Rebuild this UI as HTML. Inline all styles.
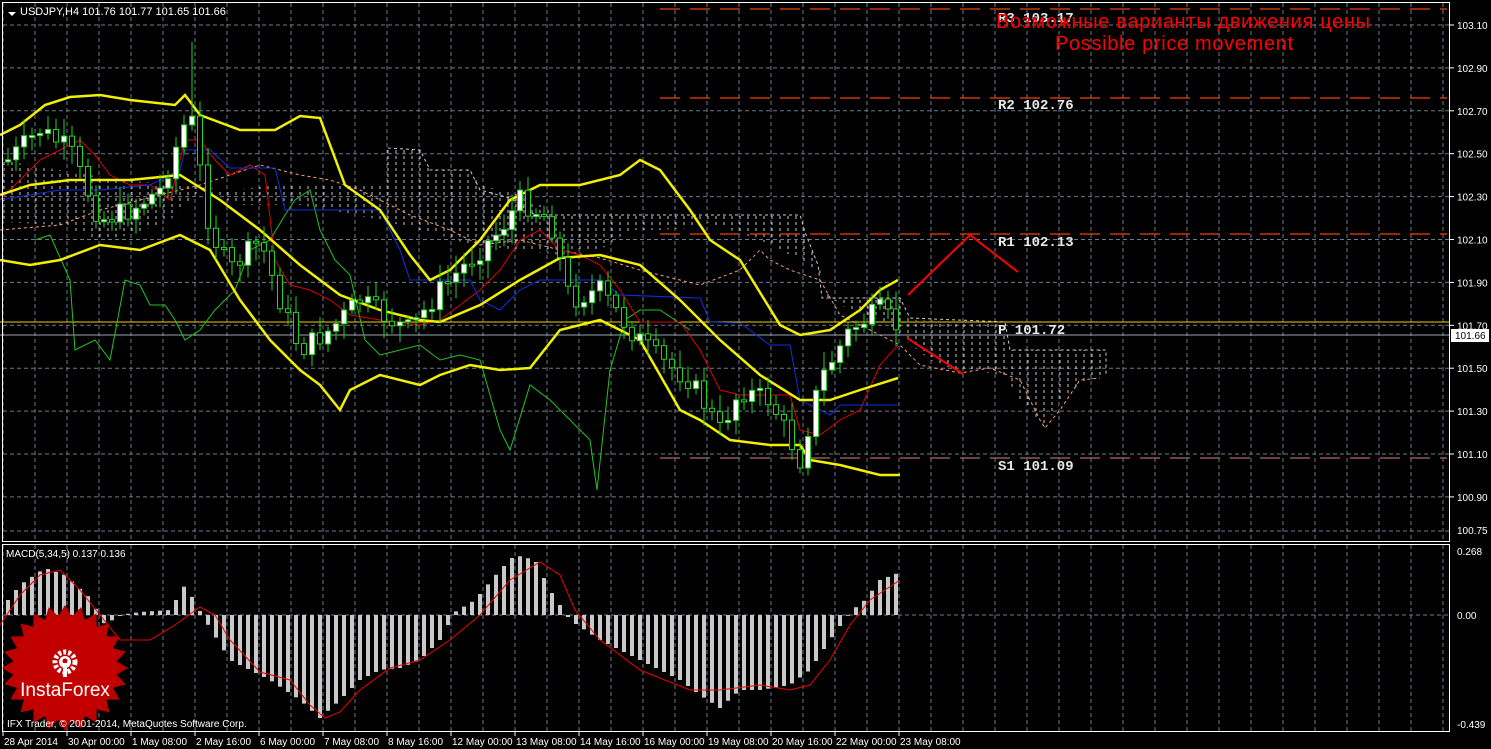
<!DOCTYPE html>
<html><head><meta charset="utf-8"><style>
html,body{margin:0;padding:0;background:#000;width:1491px;height:749px;overflow:hidden}
svg{display:block}
text{font-family:"Liberation Sans","DejaVu Sans",sans-serif}
text.mono{font-family:"Liberation Mono","DejaVu Sans Mono",monospace}
</style></head><body>
<svg id="s" width="1491" height="749" xmlns="http://www.w3.org/2000/svg">
<defs>
<pattern id="hatch" width="8" height="6" patternUnits="userSpaceOnUse"><line x1="4" y1="0" x2="4" y2="3" stroke="#ddd" stroke-width="1"/></pattern>
</defs>
<rect x="0" y="0" width="1491" height="749" fill="#000"/>
<g id="grid" stroke="#6b7a8c" stroke-dasharray="4,3" stroke-width="1"></g>
<g id="kumo">
<polygon points="0,160 60,170 120,180 180,185 230,190 280,185 320,185 380,185 388,148 420,150 430,170 470,170 480,185 520,195 560,215 640,215 700,215 800,215 804,230 820,268 823,298 838,298 900,298 910,320 1000,322 1010,350 1106,350 1106,375 1090,380 1060,400 1045,428 1030,410 1020,400 1005,375 980,372 960,372 930,360 905,340 880,320 840,305 825,290 820,275 800,260 780,250 760,240 730,230 700,220 690,228 660,230 630,230 600,250 560,255 520,250 470,245 440,235 400,225 380,220 340,212 300,205 270,205 240,205 200,190 170,220 130,235 100,240 60,225 0,222" fill="url(#hatch)" opacity="0.9"/>
<polyline points="388,148 420,150 430,170 470,170 480,190 510,198 535,215 560,215 640,215 720,215 800,215 805,232 818,265 822,298 835,298 900,298 910,318 1005,322 1010,350 1106,350 1106,376" fill="none" stroke="#fff" stroke-dasharray="3,3" opacity="0.8"/>
<polyline points="0,230 60,225 100,210 140,200 200,185 230,175 260,165 300,175 330,180 360,190 380,200 410,215 450,230 480,245 520,240 560,250 600,258 640,270 700,285 740,270 760,250 770,260 790,270 820,280 840,315 870,330 900,345 920,365 960,373 990,368 1020,380 1040,420 1045,428 1060,410 1080,380 1100,378" fill="none" stroke="#f6a070" stroke-dasharray="3,3"/>
</g>
<g stroke-dasharray="20,10" stroke-width="1.2">
<line x1="660" y1="9" x2="1447" y2="9" stroke="#f04010"/>
<line x1="660" y1="98" x2="1447" y2="98" stroke="#f04010"/>
<line x1="660" y1="234" x2="1447" y2="234" stroke="#f04010"/>
<line x1="660" y1="458" x2="1447" y2="458" stroke="#b06a5a"/>
</g>
<line x1="0" y1="322" x2="1450" y2="322" stroke="#f0d000" stroke-width="1"/>
<line x1="0" y1="335" x2="1450" y2="335" stroke="#9aa6b2" stroke-width="1"/>
<g id="ind"></g>
<g id="candles"></g>
<polyline points="908,295 970,235 1018,272" fill="none" stroke="#f00" stroke-width="2"/>
<line x1="907" y1="338" x2="963" y2="374" stroke="#f00" stroke-width="2"/>
<g font-size="14" fill="#e8e8e8" font-weight="bold">
<text class="mono" x="998" y="22">R3 103.17</text>
<text class="mono" x="998" y="109">R2 102.76</text>
<text class="mono" x="998" y="246">R1 102.13</text>
<text class="mono" x="998" y="334">P 101.72</text>
<text class="mono" x="998" y="470">S1 101.09</text>
</g>
<text x="1183" y="28" font-size="20" fill="#f00" text-anchor="middle" textLength="374">Возможные варианты движения цены</text>
<text x="1174" y="50" font-size="20" fill="#f00" text-anchor="middle" textLength="238">Possible price movement</text>
<rect x="2.5" y="2.5" width="1447" height="539" fill="none" stroke="#fff"/>
<rect x="2.5" y="544.5" width="1447" height="187" fill="none" stroke="#fff"/>
<line x1="2" y1="615" x2="1450" y2="615" stroke="#6b7a8c" stroke-dasharray="4,3"/>
<g id="macd"></g>
<polygon points="8,12 16,12 12,16" fill="#fff"/>
<text x="20" y="15" font-size="11" fill="#fff">USDJPY,H4  101.76 101.77 101.65 101.66</text>
<text x="6" y="557" font-size="10" fill="#fff">MACD(5,34,5) 0.137 0.136</text>
<g id="axis" font-size="10" fill="#fff"></g>
<rect x="1451" y="329" width="38" height="13" fill="#fff"/>
<text x="1455" y="339" font-size="10" fill="#000">101.66</text>
<g transform="translate(65,668)">
<polygon id="star" fill="#b00"/>
<circle r="52" fill="#c00" opacity="0.5"/>
<circle cx="0" cy="-6" r="10" fill="none" stroke="#fff" stroke-width="5" stroke-dasharray="3,2"/>
<circle cx="0" cy="-6" r="6" fill="#fff"/>
<circle cx="0" cy="-7" r="2.5" fill="#b00"/>
<rect x="-2" y="-5" width="4" height="14" fill="#fff"/>
<text x="0" y="28" font-size="19" fill="#fff" text-anchor="middle">InstaForex</text>
</g>
<text x="7" y="727" font-size="10" fill="#fff">IFX Trader, © 2001-2014, MetaQuotes Software Corp.</text>
</svg>
<script>
(function(){
var NS="http://www.w3.org/2000/svg";
function el(p,t,a){var e=document.createElementNS(NS,t);for(var k in a)e.setAttribute(k,a[k]);p.appendChild(e);return e;}
var g=document.getElementById('grid');
for(var x=3;x<1450;x+=32){el(g,'line',{x1:x,y1:3,x2:x,y2:541});el(g,'line',{x1:x,y1:545,x2:x,y2:731});}
var ax=document.getElementById('axis');
var pl=["103.10","102.90","102.70","102.50","102.30","102.10","101.90","101.70","101.50","101.30","101.10","100.90"];
var t,i;
for(i=0;i<pl.length;i++){var y=25+i*42.9;el(g,'line',{x1:3,y1:y,x2:1449,y2:y});el(ax,'line',{x1:1450,y1:y,x2:1454,y2:y,stroke:'#fff'});t=el(ax,'text',{x:1457,y:y+4});t.textContent=pl[i];}
el(g,'line',{x1:3,y1:531,x2:1449,y2:531});t=el(ax,'text',{x:1457,y:534});t.textContent="100.75";
t=el(ax,'text',{x:1457,y:555});t.textContent="0.268";
t=el(ax,'text',{x:1457,y:619});t.textContent="0.00";
t=el(ax,'text',{x:1457,y:728});t.textContent="-0.439";
var tl=["28 Apr 2014","30 Apr 00:00","1 May 08:00","2 May 16:00","6 May 00:00","7 May 08:00","8 May 16:00","12 May 00:00","13 May 08:00","14 May 16:00","16 May 00:00","19 May 08:00","20 May 16:00","22 May 00:00","23 May 08:00"];
for(i=0;i<tl.length;i++){var x2=3+i*64;el(ax,'line',{x1:x2,y1:732,x2:x2,y2:736,stroke:'#fff'});t=el(ax,'text',{x:x2+1,y:745});t.textContent=tl[i];}
function interp(pts,x){for(var i=0;i<pts.length-1;i++){if(x>=pts[i][0]&&x<=pts[i+1][0]){var f=(x-pts[i][0])/(pts[i+1][0]-pts[i][0]);return pts[i][1]+f*(pts[i+1][1]-pts[i][1]);}}return pts[pts.length-1][1];}
function poly(pts,c,w){el(document.getElementById('ind'),'polyline',{points:pts.map(function(p){return p.join(',')}).join(' '),fill:'none',stroke:c,'stroke-width':w});}
var up=[[0,135],[20,125],[45,105],[70,97],[100,95],[130,100],[175,105],[185,95],[200,115],[240,130],[275,130],[300,116],[320,118],[345,185],[380,210],[410,255],[430,280],[450,270],[480,240],[510,200],[540,185],[580,185],[620,175],[640,160],[660,170],[690,210],[710,240],[740,260],[780,325],[800,335],[830,330],[860,310],[880,290],[898,280]];
var mid=[[0,195],[30,185],[70,180],[130,180],[180,175],[220,200],[260,230],[300,265],[340,295],[380,310],[420,320],[440,322],[480,305],[520,280],[560,258],[600,255],[640,265],[680,300],[720,340],[760,375],[800,400],[830,400],[860,390],[898,378]];
var lo=[[0,260],[30,265],[60,260],[100,245],[140,250],[180,235],[210,250],[240,300],[270,340],[300,370],[320,385],[340,410],[350,390],[380,375],[420,385],[440,375],[470,365],[500,370],[530,368],[560,330],[600,320],[640,340],[680,410],[700,420],[730,440],[770,445],[800,445],[810,460],[840,465],[860,470],[880,475],[900,475]];
var gr=[[35,240],[50,235],[70,280],[75,350],[95,340],[110,360],[125,280],[140,285],[150,305],[165,305],[175,320],[185,340],[200,330],[215,310],[235,290],[250,250],[270,240],[285,215],[295,200],[310,190],[320,230],[335,260],[350,275],[365,340],[380,355],[400,350],[420,345],[440,360],[460,355],[480,360],[500,430],[510,450],[530,385],[550,400],[570,420],[590,440],[597,490],[610,370],[625,320],[640,310],[660,310],[675,320],[690,330]];
var red=[[0,200],[20,180],[40,160],[60,150],[80,140],[95,155],[110,175],[130,185],[150,185],[170,200],[185,140],[200,140],[215,160],[230,175],[250,165],[265,175],[275,260],[290,285],[310,290],[330,300],[350,315],[380,320],[420,325],[440,320],[460,305],[480,290],[500,270],[520,240],[540,230],[560,250],[580,255],[600,265],[620,290],[640,322],[680,322],[700,350],[720,390],[740,395],[770,395],[790,395],[800,430],[820,435],[840,420],[860,410],[880,365],[898,345]];
var blue=[[0,200],[30,195],[60,190],[100,190],[150,185],[180,170],[185,150],[210,150],[230,168],[275,168],[285,210],[380,210],[400,250],[410,280],[470,280],[480,300],[500,310],[520,290],[540,280],[600,280],[620,295],[700,298],[710,322],[740,323],[770,345],[790,345],[800,400],[830,415],[840,405],[860,405],[870,405],[898,405]];
poly(gr,'#22c422',1);
poly(red,'#e00000',1);poly(blue,'#1030e0',1);
poly(up,'#f0f000',2.5);poly(mid,'#f0f000',2.5);poly(lo,'#f0f000',2.5);
var price=[[8,160],[40,130],[70,150],[100,220],[130,210],[160,190],[190,110],[210,230],[230,270],[260,240],[280,300],[300,350],[330,330],[360,300],[390,320],[410,330],[440,290],[470,260],[500,230],[520,200],[550,220],[570,300],[600,290],[630,330],[660,360],[690,380],[720,430],[740,390],[770,400],[800,460],[820,380],[850,330],[880,310],[900,330]];
var cg=document.getElementById('candles');
var prev=interp(price,8);
var seed=7;function rnd(){seed=(seed*9301+49297)%233280;return seed/233280;}
for(i=0;i<112;i++){var cx=8+i*8;var c=interp(price,cx)+(rnd()-0.5)*22;var o=prev;prev=c;
var hi=Math.min(o,c)-4-rnd()*14,lw=Math.max(o,c)+4+rnd()*14;
if(i==23){hi=42;}
el(cg,'line',{x1:cx,y1:hi,x2:cx,y2:lw,stroke:'#1fd31f'});
var bt=Math.min(o,c),bh=Math.max(2,Math.abs(o-c));
el(cg,'rect',{x:cx-2.5,y:bt,width:5,height:bh,fill:(c<o?'#fff':'#000'),stroke:'#1fd31f','stroke-width':1});}
var mh=[[8,600],[20,585],[45,568],[65,575],[90,598],[105,625],[120,615],[140,612],[170,610],[185,585],[195,602],[205,620],[230,660],[270,680],[300,700],[320,718],[340,700],[360,680],[380,670],[400,668],[420,660],[440,640],[455,612],[475,600],[500,570],[515,555],[535,560],[550,590],[570,620],[600,640],[640,660],[680,680],[700,695],[720,708],[740,690],[760,690],[790,685],[810,670],[830,640],[850,612],[865,600],[880,580],[898,573]];
var mg=document.getElementById('macd');
for(i=0;i<112;i++){var mx=8+i*8;var my=interp(mh,mx);el(mg,'rect',{x:mx-2,y:Math.min(my,615),width:4,height:Math.max(1,Math.abs(my-615)),fill:'#c8c8c8'});}
var sig=[[0,625],[20,595],[40,575],[60,570],[80,590],[100,615],[120,640],[150,640],[175,625],[200,607],[215,615],[230,640],[260,672],[290,680],[310,705],[325,718],[340,712],[360,690],[390,668],[420,660],[450,640],[480,615],[510,580],[540,562],[560,575],[575,610],[600,640],[640,670],[690,690],[720,690],[760,685],[790,690],[810,685],[830,660],[850,625],[870,600],[900,580]];
el(mg,'polyline',{points:sig.map(function(p){return p.join(',')}).join(' '),fill:'none',stroke:'#e00','stroke-width':1});
var st=[];for(i=0;i<48;i++){var a=i*Math.PI/24;var r=i%2?52:63;st.push((r*Math.cos(a)).toFixed(1)+','+(r*Math.sin(a)).toFixed(1));}
document.getElementById('star').setAttribute('points',st.join(' '));
})();
</script>
</body></html>
